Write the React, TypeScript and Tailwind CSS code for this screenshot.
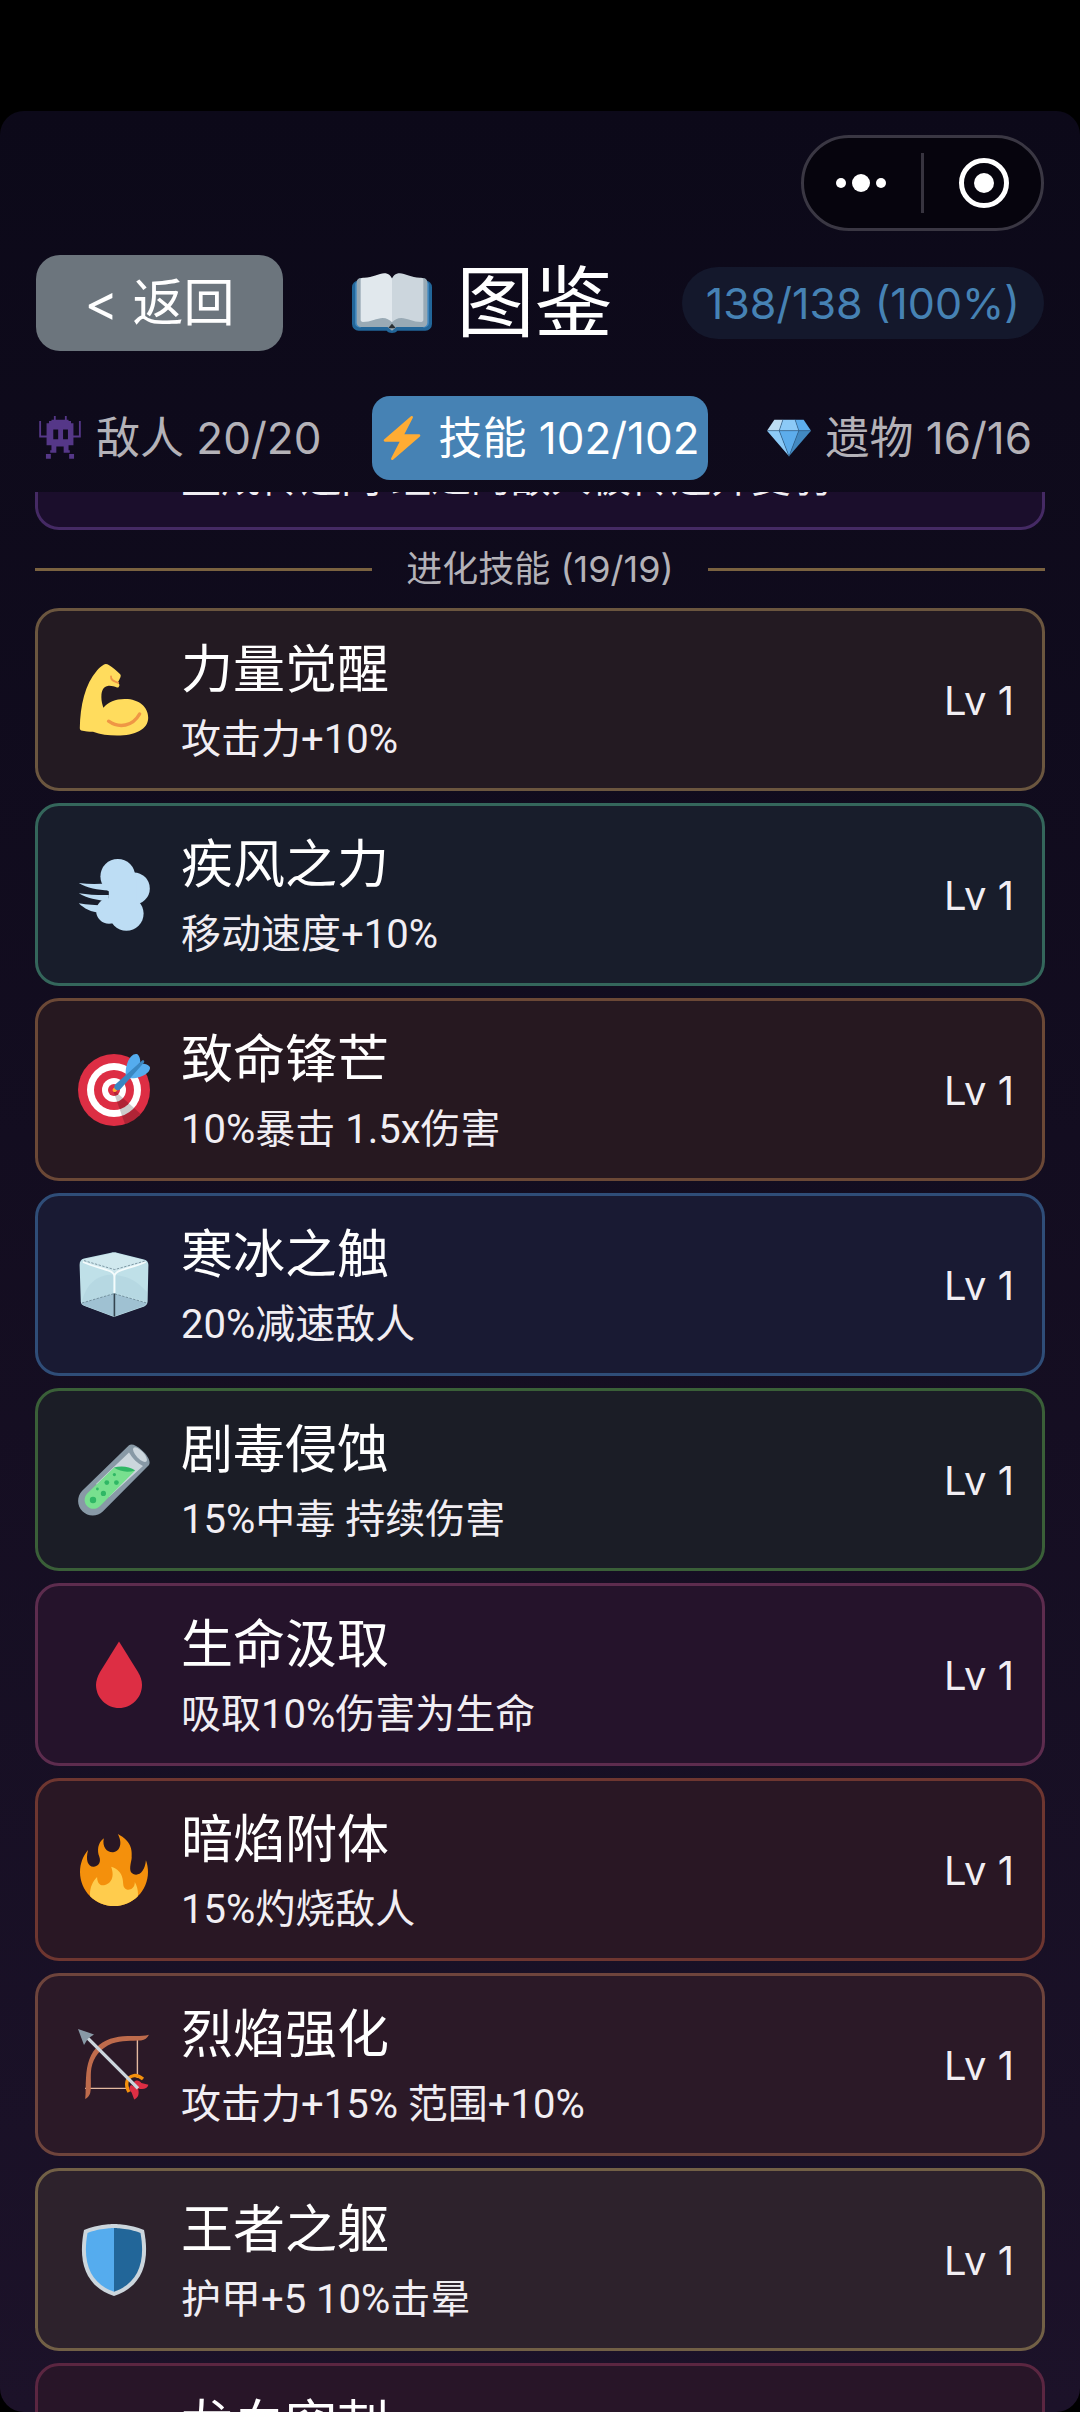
import { useLayoutEffect, useRef, useState } from "react";
import type { ReactNode } from "react";

function BookIcon() {
  return (
    <svg viewBox="0 0 36 27" className="h-[60px] w-[80px]" aria-hidden="true">
      <path fill="#226699" d="M3 3.4h30a3 3 0 0 1 3 3V23a3 3 0 0 1-3 3H20.400c-.5.700-1.400 1-2.400 1s-1.900-.3-2.400-1H3a3 3 0 0 1-3-3V6.400a3 3 0 0 1 3-3z" />
      <path fill="#4289c1" d="M1.400 5v17.500c0 1 .8 2 2 2h.6V4H3c-1 0-1.600.4-1.600 1zm33.200 0v17.500c0 1-.8 2-2 2H32V4h1c1 0 1.600.4 1.600 1z" />
      <path fill="#99aab5" d="M4 2.200h28c1.100 0 1.900.8 1.900 1.800v18.400c0 1.100-.9 1.900-1.900 1.900H20L18 26l-2-1.700H4c-1 0-1.900-.8-1.900-1.900V4c0-1 .8-1.800 1.900-1.800z" />
      <path fill="#e1e8ed" d="M3.900 3c0-.5.400-.9 1-.9C9 2.300 12 .2 14.500.1c1.900 0 3.300 1.200 3.500 2.700v19.400c-1.200-1.300-2.400-2-4.200-2-2.500 0-5.400 1.800-8.900 1.800-.6 0-1-.4-1-1z" />
      <path fill="#ccd6dd" d="M32.100 3c0-.5-.4-.9-1-.9C27 2.300 24 .2 21.500.1c-1.900 0-3.300 1.200-3.500 2.700v19.400c1.200-1.300 2.400-2 4.200-2 2.500 0 5.400 1.800 8.900 1.800.6 0 1-.4 1-1z" />
      <path fill="#292f33" d="M18 22.800l1.600 1.800c-.8.300-2.400.3-3.200 0z" />
    </svg>
  );
}

function AlienIcon() {
  return (
    <svg viewBox="0 0 36 36" className="size-11 shrink-0" fill="#553788" aria-hidden="true">
      <path d="M7 6h2V4h2V3h2V0h1.500v3H22V0h1.500v3H25v1h2v2h2v10h4.500V4H35v13.500h-6V24h-4v4h1v2h-5v-5h-6v5h-5v-2h1v-4H7v-6.500H1V4h1.500v12H7z" />
      <path d="M6.500 31h4v4h-4zM25.500 31h4v4h-4z" />
      <path fill="#0e0a1b" d="M12.500 11h4v8h-4zM20.500 11h4v8h-4z" />
    </svg>
  );
}

function BoltIcon() {
  return (
    <svg viewBox="0 0 36 36" className="size-11 shrink-0" aria-hidden="true">
      <path fill="#FFAC33" d="M32.938 15.651C32.792 15.26 32.418 15 32 15H19.925L26.89 1.458c.219-.426.106-.947-.271-1.243C26.437.071 26.218 0 26 0c-.233 0-.466.082-.653.243L18 6.588 3.347 19.243c-.316.273-.43.714-.284 1.105S3.582 21 4 21h12.075L9.110 34.542c-.219.426-.106.947.271 1.243.182.144.401.215.619.215.233 0 .466-.082.653-.243L18 29.412l14.653-12.655c.317-.273.43-.714.285-1.106z" />
    </svg>
  );
}

function GemIcon() {
  return (
    <svg viewBox="0 0 36 36" className="size-11 shrink-0" aria-hidden="true">
      <path fill="#BDDDF4" d="M13 3H6l-6 9h10z" />
      <path fill="#5DADEC" d="M36 12l-6-9h-7l3 9z" />
      <path fill="#4289C1" d="M26 12h10L18 33z" />
      <path fill="#8CCAF7" d="M10 12H0l18 21zM13 3l-3 9h16l-3-9z" />
      <path fill="#5DADEC" d="M18 33l-8-21h16z" />
      <path fill="none" stroke="#2c5c86" strokeWidth=".5" d="M0 12h36M13 3l-3 9 8 21 8-21-3-9" />
    </svg>
  );
}

function Glyph({ children }: { children: ReactNode }) {
  return (
    <svg viewBox="0 0 36 36" className="size-[72px] shrink-0" aria-hidden="true">
      {children}
    </svg>
  );
}

const muscle = (
  <Glyph>
    <path fill="#FFDC5D" d="M12.800.4c.8-.6 1.800-.4 2.600.1 2 1.300 4 2.900 5.700 4.600.5.600.2 1.500-.2 2.200-.2.600-.6 1.300-1 1.900.6.500.9 1 .8 1.500-.2.700-.5 1.200-1.200 1-1.600-.5-3.200-1-4.700-.7-2.300.5-3 2.500-3.100 5.100-.1 2 .4 4 1 5.800 2.400-3 6.300-4.500 11-4.400 6.600 0 11.400 3.900 11.400 9.400 0 5.800-6.500 8.900-15.600 8.900-4.300 0-8.400-.6-12-1.900-2 0-4-.3-5.900-.7-.5-.2-.7-.6-.7-1.200C1.100 21 3.500 10 9.500 3.300 10.500 2 11.600 1.200 12.800.4z" />
    <path fill="none" stroke="#EF9645" strokeWidth="1.700" strokeLinecap="round" d="M15.300 28.600c5.300 3.700 12 2.600 15.500-3.600" />
    <path fill="none" stroke="#EF9645" strokeWidth=".9" strokeLinecap="round" d="M16.500 6.200c-.2 1.700 1 2.400 3.600 3.200" />
  </Glyph>
);

const wind = (
  <Glyph>
    <g fill="#BDDDF4">
      <circle cx="19.900" cy="8.700" r="8.700" />
      <circle cx="27.900" cy="14.700" r="8" />
      <circle cx="24.200" cy="27.300" r="8.600" />
      <circle cx="15.500" cy="26" r="6.400" />
      <path d="M15.400 10h14v16h-14z" />
      <path d="M.4 12c5 .6 9.500.5 15 .2v3.500C10 15.600 4.500 14.500.4 12zM.4 17.100c5 .7 9.500 1 15 .9v3C9.500 20.700 4.500 19.500.4 17.100zM.4 22.100c5 .8 9.500 1.100 15 1l-4 3.800C6.500 26.600 3 24.700.4 22.100z" />
    </g>
  </Glyph>
);

const target = (
  <Glyph>
    <circle fill="#DD2E44" cx="18" cy="18" r="18" />
    <circle fill="#FFF" cx="18" cy="18" r="13.500" />
    <circle fill="#DD2E44" cx="18" cy="18" r="10" />
    <circle fill="#FFF" cx="18" cy="18" r="6" />
    <circle fill="#DD2E44" cx="18" cy="18" r="3" />
    <path opacity=".2" d="M18.240 18.282l13.144 11.754s-2.647 3.376-7.890 5.109L17.579 18.420l.661-.138z" />
    <path fill="#FFAC33" d="M18.294 19c-.255 0-.509-.097-.704-.292-.389-.389-.389-1.018 0-1.407l.563-.563c.389-.389 1.018-.389 1.408 0 .388.389.388 1.018 0 1.407l-.564.563c-.194.195-.448.292-.703.292z" />
    <path fill="#55ACEE" d="M24.016 6.981c-.403 2.079 0 4.691 0 4.691l7.054-7.388c.291-1.454-.528-3.932-1.718-4.238-1.190-.306-4.079.803-5.336 6.935zm5.003 5.003c-2.079.403-4.691 0-4.691 0l7.388-7.054c1.454-.291 3.932.528 4.238 1.718.306 1.190-.803 4.079-6.935 5.336z" />
    <path fill="#3A87C2" d="M32.798 4.485L21.176 17.587c-.362.362-1.673.882-2.510.046-.836-.836-.419-2.080-.057-2.443L31.815 3.501s.676-.635 1.159-.152-.176 1.136-.176 1.136z" />
  </Glyph>
);

const ice = (
  <Glyph>
    <path fill="#bfe0e8" d="M3 4.800L16.500 1.900c1-.3 2-.3 3 0L33 5.200c1.600.5 2.300 1.500 2.200 3.100l-.4 18c-.1 1.300-.6 1.900-1.700 2.400L18 34 3 28.400c-1-.4-1.500-1-1.600-2.100L.8 8C.8 6.300 1.500 5.200 3 4.800z" />
    <path fill="#d0e8ee" d="M3 5.200L16.500 2.200c1-.3 2-.3 3 0L33 5.600c1 .4 1 1.200 0 1.500l-13 4c-1.200.3-2.600.3-3.800 0L3 6.700c-1-.4-1-1.200 0-1.500z" />
    <path fill="#aacfdb" d="M2 26.500C4 18 9 13 17.500 12.800V22L3 27.500zM19 13c7 1 11 3.500 15.500 8.500v5L19 22z" opacity=".45" />
    <path fill="#9fc1d2" d="M1.900 27L18 22.300v11.400L3 28.200zM18 22.300L34.400 27l-1.300 1.500L18 33.700z" />
    <path fill="none" stroke="#f4fbfc" strokeWidth=".9" d="M2.500 6.500c5 2.300 10.500 3.200 13.800 4.700 1.200.6 1.900 1.300 1.900 2.800v8M33.800 6.500c-5 2.300-10.500 3.200-13.600 4.700-1.300.6-2 1.300-2 2.800" />
    <path fill="none" stroke="#5d7785" strokeWidth=".35" strokeDasharray="1.200 .7" d="M3 5.800l15.300 4.500L33.500 6M2 27l16-4.700L34.400 27" />
    <path fill="none" stroke="#34444f" strokeWidth=".8" d="M18.200 22.300v11.500" />
  </Glyph>
);

const tube = (
  <Glyph>
    <path fill="#8899a6" d="M25.500.6c1.300-.9 3.600-.1 6.300 2.400 3.200 2.800 4.700 5.800 3.700 7.500L12.400 33.700c-2.800 2.700-7.400 2.700-10.200-.1s-2.900-7.300-.1-10.200z" />
    <path fill="#ccd6dd" d="M25.500 4.200c1.800 3 4 5.300 7 6.800L15.500 26.500 9 20z" />
    <path fill="#78e08f" d="M17.800 12c3.500-.4 6.500 1.400 10.700 1.400L10.900 31.100c-1.700 1.700-4.600 1.700-6.300 0-1.700-1.800-1.700-4.600 0-6.400z" />
    <ellipse fill="#ccd6dd" cx="31" cy="5.300" rx="1.900" ry="4.700" transform="rotate(-43 31 5.300)" />
    <path fill="#2fb765" d="M17.900 11.800c3.600-1 7.700-.6 10.800 1.400-3.700 1.100-7.500.8-10.800-1.400z" />
    <g fill="#2fb765">
      <circle cx="7.500" cy="28" r="1.600" />
      <circle cx="12.700" cy="24.700" r="1.300" />
      <circle cx="9.700" cy="22.500" r=".7" />
      <circle cx="14.400" cy="19.300" r="1.200" />
      <circle cx="19.200" cy="19.300" r="1.200" />
      <circle cx="18.200" cy="15.300" r=".8" />
    </g>
  </Glyph>
);

const drop = (
  <Glyph>
    <path fill="#DD2E44" d="M20.500 1.300l9.500 15.200c1.300 2.100 2 4.300 2 6.500 0 6.300-5.200 11.500-11.500 11.500S9 29.300 9 23c0-2.200.8-4.400 2-6.500z" />
  </Glyph>
);

const fire = (
  <Glyph>
    <path fill="#F4900C" d="M35 19c0-2.062-.367-4.039-1.040-5.868-.46 5.389-3.333 8.157-6.335 6.868-2.812-1.208-.917-5.917-.777-8.164.236-3.809-.012-8.169-6.931-11.794 2.875 5.500.333 8.917-2.333 9.125-2.958.231-5.667-2.542-4.667-7.042-3.238 2.386-3.332 6.402-2.333 9 1.042 2.708-.042 4.958-2.583 5.208-2.840.28-4.418-3.041-2.963-8.333C2.520 10.965 1 14.805 1 19c0 9.389 7.611 17 17 17s17-7.611 17-17z" />
    <path fill="#FFCC4D" d="M28.394 23.999c.148 3.084-2.561 4.293-4.019 3.709-2.106-.843-1.541-2.291-2.083-5.291s-2.625-5.083-5.708-6c2.250 6.333-1.247 8.667-3.080 9.084-1.872.426-3.753-.001-3.968-4.007C7.352 23.668 6 26.676 6 30c0 .368.023.73.055 1.090C9.125 34.124 13.342 36 18 36s8.875-1.876 11.945-4.910c.032-.36.055-.722.055-1.090 0-2.187-.584-4.236-1.606-6.001z" />
  </Glyph>
);

const bow = (
  <Glyph>
    <path fill="none" stroke="#e3b8a0" strokeWidth=".7" d="M29.700 3.500v21M3.500 29.700h21" />
    <path fill="#be6b4c" d="M35.500 2.900c-1 1.600-2 2.700-4 2.800-5 .2-9.500-.2-14.500 1.600C11 9.800 7.800 14 6.700 19.500c-.7 4 .2 9-.6 12.500-.3 1.300-1.300 2.400-2.500 3 .4-3.500.1-7 .4-10.500.4-7 2-12.500 6.500-16.500C15 4.200 21 3.500 27 3.500c3 0 5.800.1 8.500-.6z" />
    <path fill="none" stroke="#F4900C" strokeWidth="1.700" d="M25.500 31.500c-2-3.500-1.500-7.500 2.500-8.200 1.600-.2 3 .5 4.500 1.700" />
    <path fill="#DD2E44" d="M28 26.500c1.200-1.300 2.800-.8 3.700.5l3.500.9c-.6 2-2.600 2.600-5.200 1.800zM26.500 28c-1.300 1.200-.8 2.800.3 3.700l1.300 3.500c2-.8 2.700-2.800 1.900-5.500z" />
    <path stroke="#ccd6dd" strokeWidth="1.700" d="M3.500 3.200L30 29.700" />
    <path fill="#8899a6" d="M0 0l8 2.700-3 2L3 8z" />
  </Glyph>
);

const shield = (
  <Glyph>
    <path fill="#CCD6DD" d="M33 3c-7-3-15-3-15-3S10 0 3 3C0 18 3 31 18 36c15-5 18-18 15-33z" />
    <path fill="#55ACEE" d="M18 33.884C6.412 29.729 1.961 19.831 4.760 4.444 11.063 2.029 17.928 2 18 2z" />
    <path fill="#226699" d="M31.240 4.444C25.027 2.040 18.069 2 18.002 2H18v31.884c11.588-4.155 16.039-14.053 13.240-29.440z" />
  </Glyph>
);

type Skill = { icon?: ReactNode; name?: string; desc?: string; level?: string; tone: string };

const previousSkill: Skill = {
  desc: "生成传送门 经过的敌人被传送并变弱",
  tone: "border-[#452a64] bg-[#1b0e2c]",
};

const skills: Skill[] = [
  { icon: muscle, name: "力量觉醒", desc: "攻击力+10%", level: "Lv 1", tone: "border-[#6b563f] bg-[#231a22]" },
  { icon: wind, name: "疾风之力", desc: "移动速度+10%", level: "Lv 1", tone: "border-[#34665b] bg-[#181d2b]" },
  { icon: target, name: "致命锋芒", desc: "10%暴击 1.5x伤害", level: "Lv 1", tone: "border-[#6b4836] bg-[#261820]" },
  { icon: ice, name: "寒冰之触", desc: "20%减速敌人", level: "Lv 1", tone: "border-[#2f4d78] bg-[#191a33]" },
  { icon: tube, name: "剧毒侵蚀", desc: "15%中毒 持续伤害", level: "Lv 1", tone: "border-[#3a5f38] bg-[#1b1d26]" },
  { icon: drop, name: "生命汲取", desc: "吸取10%伤害为生命", level: "Lv 1", tone: "border-[#5d2c4e] bg-[#25132b]" },
  { icon: fire, name: "暗焰附体", desc: "15%灼烧敌人", level: "Lv 1", tone: "border-[#6e3630] bg-[#291724]" },
  { icon: bow, name: "烈焰强化", desc: "攻击力+15% 范围+10%", level: "Lv 1", tone: "border-[#6e443c] bg-[#2b1927]" },
  { icon: shield, name: "王者之躯", desc: "护甲+5 10%击晕", level: "Lv 1", tone: "border-[#726046] bg-[#2d222c]" },
  { name: "龙血穿刺", tone: "border-[#5b2641] bg-[#281528]" },
];

function SkillCard({ icon, name, desc, level, tone }: Skill) {
  return (
    <li className={`flex h-[183px] shrink-0 items-center gap-[30px] rounded-3xl border-3 pr-7 pl-10 ${tone}`}>
      {icon ?? <span className="size-[72px] shrink-0" />}
      <div className="flex min-w-0 flex-1 flex-col gap-1 pt-1 pl-px">
        <h3 className="min-h-[72px] text-[52px] leading-[72px] text-white">{name}</h3>
        <p className="min-h-[60px] font-[Roboto,'Noto_Sans_CJK_SC',sans-serif] text-[40px] leading-[60px] whitespace-nowrap text-[#f1eef3]">
          {desc}
        </p>
      </div>
      <span className="pt-[3px] text-[40px] text-[#f1eef3]">{level}</span>
    </li>
  );
}

const tabs = [
  { id: "enemies", icon: <AlienIcon />, label: "敌人 20/20", align: "justify-start pl-[2px]" },
  { id: "skills", icon: <BoltIcon />, label: "技能 102/102", align: "justify-center" },
  { id: "relics", icon: <GemIcon />, label: "遗物 16/16", align: "justify-end pr-3" },
];

export default function App() {
  const [active, setActive] = useState("skills");
  const list = useRef<HTMLDivElement>(null);

  useLayoutEffect(() => {
    if (list.current) list.current.scrollTop = 145;
  }, []);

  return (
    <div className="flex h-screen flex-col bg-black pt-[111px] font-[Inter,'Noto_Sans_CJK_SC',sans-serif]">
      <main className="flex min-h-0 flex-1 flex-col overflow-hidden rounded-3xl bg-linear-to-b from-[#0c0919] to-[#1c1229] pt-6">
        <div className="flex justify-end px-9">
          <div className="flex h-24 w-[243px] items-center rounded-full border-3 border-[#3a3743] bg-[#06040d]">
            <button type="button" aria-label="更多" className="flex h-full flex-1 items-center justify-center gap-[6px] pr-[3px]">
              <span className="size-[10px] rounded-full bg-white" />
              <span className="size-[18px] rounded-full bg-white" />
              <span className="size-[10px] rounded-full bg-white" />
            </button>
            <span className="h-[60px] w-[3px] bg-[#37343f]" />
            <button type="button" aria-label="关闭" className="flex h-full flex-1 items-center justify-center pl-[3px]">
              <span className="flex size-[50px] items-center justify-center rounded-full border-5 border-white">
                <span className="size-5 rounded-full bg-white" />
              </span>
            </button>
          </div>
        </div>

        <header className="mt-6 flex h-24 items-center justify-between px-9">
          <button type="button" className="h-24 w-[247px] rounded-3xl bg-[#6c757d] text-[51px] text-white">
            &lt; 返回
          </button>
          <h1 className="flex items-center gap-6 text-[78px] leading-24 text-white">
            <BookIcon />
            图鉴
          </h1>
          <span className="rounded-full bg-[#14182c] px-6 text-[43px] leading-[72px] whitespace-nowrap text-[#4682b4]">
            138/138 (100%)
          </span>
        </header>

        <nav role="tablist" className="mt-[45px] grid grid-cols-3 px-9">
          {tabs.map((tab) => (
            <button
              key={tab.id}
              type="button"
              role="tab"
              aria-selected={active === tab.id}
              onClick={() => setActive(tab.id)}
              className={`flex h-[84px] items-center gap-[14px] rounded-[18px] text-[44px] whitespace-nowrap ${tab.align} ${
                active === tab.id ? "bg-[#4682b4] text-white" : "text-[#b4b2b8]"
              }`}
            >
              {tab.icon}
              {tab.label}
            </button>
          ))}
        </nav>

        <div ref={list} className="mt-3 min-h-0 flex-1 overflow-y-auto px-[35px] pb-12 [scrollbar-width:none]">
          <ul>
            <SkillCard {...previousSkill} />
          </ul>
          <div className="my-3 grid h-[54px] grid-cols-3 items-center">
            <span className="h-[3px] bg-[#7a6240]" />
            <h2 className="text-center text-[36px] leading-[54px] whitespace-nowrap text-[#b4b2b8]">进化技能 (19/19)</h2>
            <span className="h-[3px] bg-[#7a6240]" />
          </div>
          <ul className="flex flex-col gap-3">
            {skills.map((skill) => (
              <SkillCard key={skill.name} {...skill} />
            ))}
          </ul>
        </div>
      </main>
    </div>
  );
}
